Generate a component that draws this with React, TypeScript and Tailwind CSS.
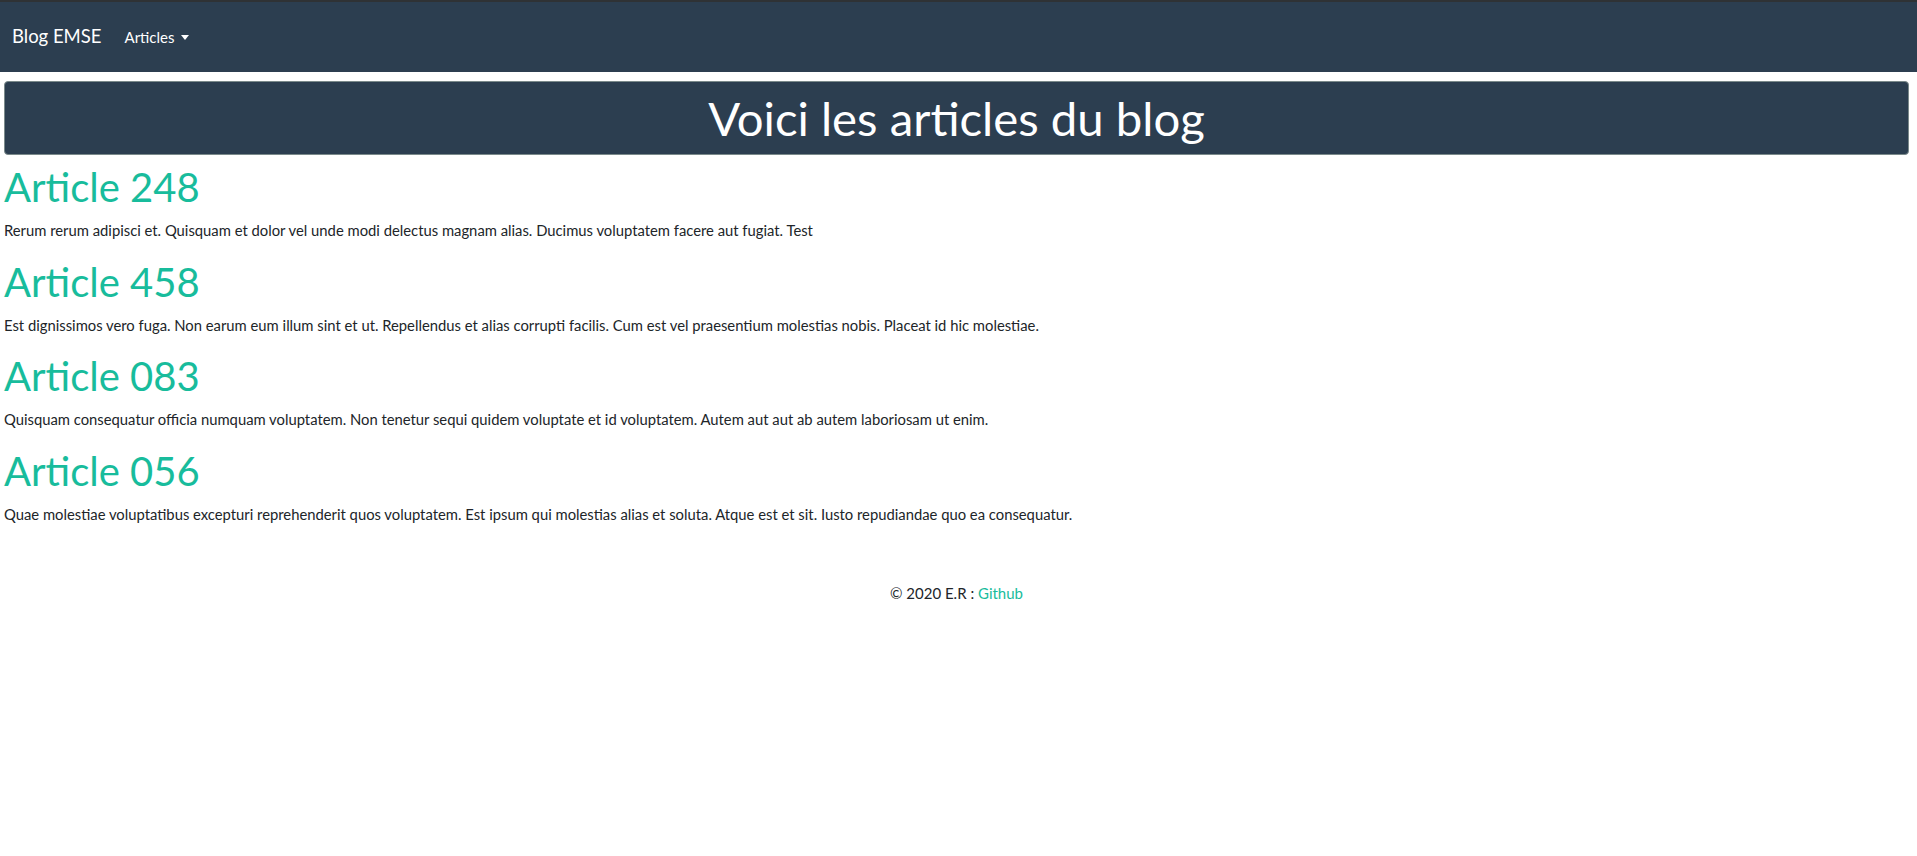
import React from "react";

const articles = [
  {
    title: "Article 248",
    body: "Rerum rerum adipisci et. Quisquam et dolor vel unde modi delectus magnam alias. Ducimus voluptatem facere aut fugiat. Test",
  },
  {
    title: "Article 458",
    body: "Est dignissimos vero fuga. Non earum eum illum sint et ut. Repellendus et alias corrupti facilis. Cum est vel praesentium molestias nobis. Placeat id hic molestiae.",
  },
  {
    title: "Article 083",
    body: "Quisquam consequatur officia numquam voluptatem. Non tenetur sequi quidem voluptate et id voluptatem. Autem aut aut ab autem laboriosam ut enim.",
  },
  {
    title: "Article 056",
    body: "Quae molestiae voluptatibus excepturi reprehenderit quos voluptatem. Est ipsum qui molestias alias et soluta. Atque est et sit. Iusto repudiandae quo ea consequatur.",
  },
];

export default function App() {
  return (
    <div className="min-h-screen bg-white font-['Lato','Liberation_Sans',sans-serif] text-[15px] leading-[1.5] text-[#212529]">
      <div className="h-[2px] bg-[#2f3235]" />
      <nav className="flex h-[70px] items-center bg-[#2c3e50] px-[12px]">
        <span className="text-[18.5px] text-white">Blog EMSE</span>
        <span className="ml-[23px] flex items-center text-white">
          Articles
          <span className="ml-[7px] mt-[1px] h-0 w-0 border-x-[4.5px] border-t-[5px] border-x-transparent border-t-white" />
        </span>
      </nav>
      <main className="pl-[4px] pr-[8px] pt-[9px]">
        <div className="flex h-[74px] items-center justify-center rounded-[4px] border border-[#7b8a8b] bg-[#2c3e50]">
          <h1 className="text-[47.3px] leading-[57.6px] text-white">Voici les articles du blog</h1>
        </div>
        <div className="pt-[8px]">
          {articles.map((a) => (
            <div key={a.title}>
              <h2 className="mb-[8px] text-[40px] leading-[48px] text-[#18bc9c]">{a.title}</h2>
              <p className="mb-[16px] text-[14.8px] leading-[22.5px]">{a.body}</p>
            </div>
          ))}
        </div>
        <footer className="pt-[41px] text-center">
          © 2020 E.R : <a className="text-[#18bc9c]">Github</a>
        </footer>
      </main>
    </div>
  );
}
